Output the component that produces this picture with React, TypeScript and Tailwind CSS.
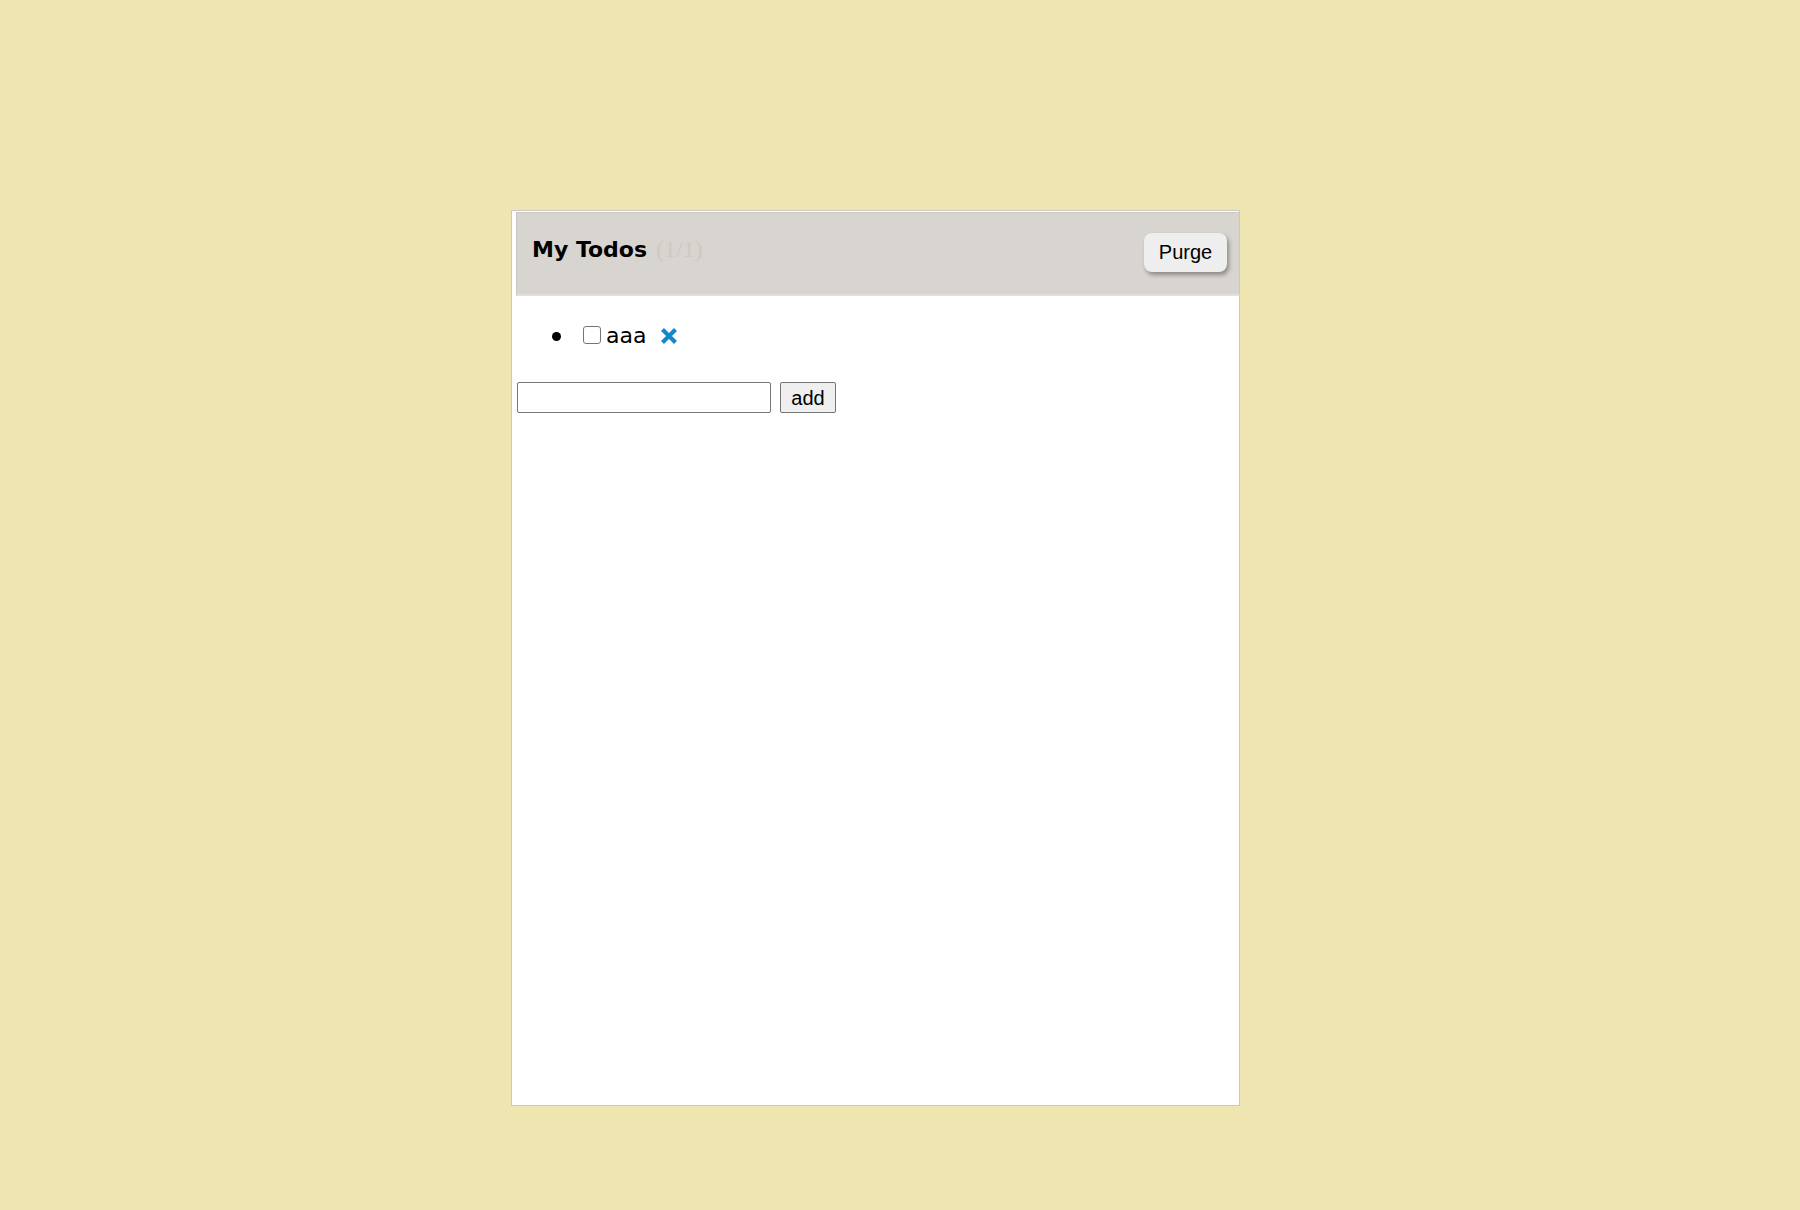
import { useState } from 'react';

interface Todo {
  id: number;
  text: string;
  done: boolean;
}

function CrossIcon() {
  return (
    <svg width="20" height="20" viewBox="0 0 20 20" aria-hidden="true">
      <path d="M3.5 3.5 L16.5 16.5 M16.5 3.5 L3.5 16.5" stroke="#1486cc" strokeWidth="4.2" strokeLinecap="butt" />
    </svg>
  );
}

export default function App() {
  const [todos, setTodos] = useState<Todo[]>([{ id: 1, text: 'aaa', done: false }]);
  const [draft, setDraft] = useState('');

  const remaining = todos.filter(t => !t.done).length;

  const add = () => {
    if (!draft.trim()) return;
    setTodos([...todos, { id: Date.now(), text: draft, done: false }]);
    setDraft('');
  };

  return (
    <div className="min-h-[1210px] bg-[#eee5b0] pt-[210px] pl-[511px]" style={{ fontFamily: '"DejaVu Sans", Verdana, sans-serif' }}>
      <div className="w-[729px] h-[896px] bg-white border border-[#c8c8c8] pt-px">
        <div className="ml-[4px] -mr-[1px] h-[84px] bg-[#d8d4cf] border border-[#c9c5c0] border-b-[2px] border-b-[#e2e0dd] flex items-center justify-between pl-[15px] pr-[12px]">
          <h1 className="text-[22px] font-bold text-black -mt-[9px] flex items-baseline">
            My Todos
            <span className="ml-[9px] text-[24px] font-normal text-[#cdc9c4]" style={{ fontFamily: '"Liberation Serif", serif' }}>
              ({remaining}/{todos.length})
            </span>
          </h1>
          <button
            onClick={() => setTodos(todos.filter(t => !t.done))}
            className="w-[83px] h-[39px] -mt-[3px] rounded-[8px] bg-[#eeeeee] text-[20px] text-black shadow-[2px_3px_4px_rgba(0,0,0,0.35)]"
            style={{ fontFamily: '"Liberation Sans", Arial, sans-serif' }}
          >
            Purge
          </button>
        </div>

        <ul className="mt-[30px] pl-[40px]">
          {todos.map(t => (
            <li key={t.id} className="flex items-center h-[22px] text-[22px] text-black">
              <span className="w-[9px] h-[9px] rounded-full bg-black mr-[22px] -mt-[2px]" />
              <input
                type="checkbox"
                checked={t.done}
                onChange={() => setTodos(todos.map(x => (x.id === t.id ? { ...x, done: !x.done } : x)))}
                className="appearance-none w-[18px] h-[18px] rounded-[3px] border border-[#767676] bg-white mr-[5px] -mt-[4px]"
              />
              <span className="leading-none -mt-[2px]">{t.text}</span>
              <button
                onClick={() => setTodos(todos.filter(x => x.id !== t.id))}
                className="ml-[13px] -mt-[2px] flex items-center"
              >
                <CrossIcon />
              </button>
            </li>
          ))}
        </ul>

        <div className="mt-[34px] pl-[5px] flex items-center gap-[9px]" style={{ fontFamily: '"Liberation Sans", Arial, sans-serif' }}>
          <input
            value={draft}
            onChange={e => setDraft(e.target.value)}
            className="w-[254px] h-[31px] border border-[#767676] rounded-[2px] px-1 text-[20px] outline-none"
          />
          <button onClick={add} className="w-[56px] h-[31px] border border-[#767676] rounded-[2px] bg-[#efefef] text-[20px] text-black leading-none">
            add
          </button>
        </div>
      </div>
    </div>
  );
}
